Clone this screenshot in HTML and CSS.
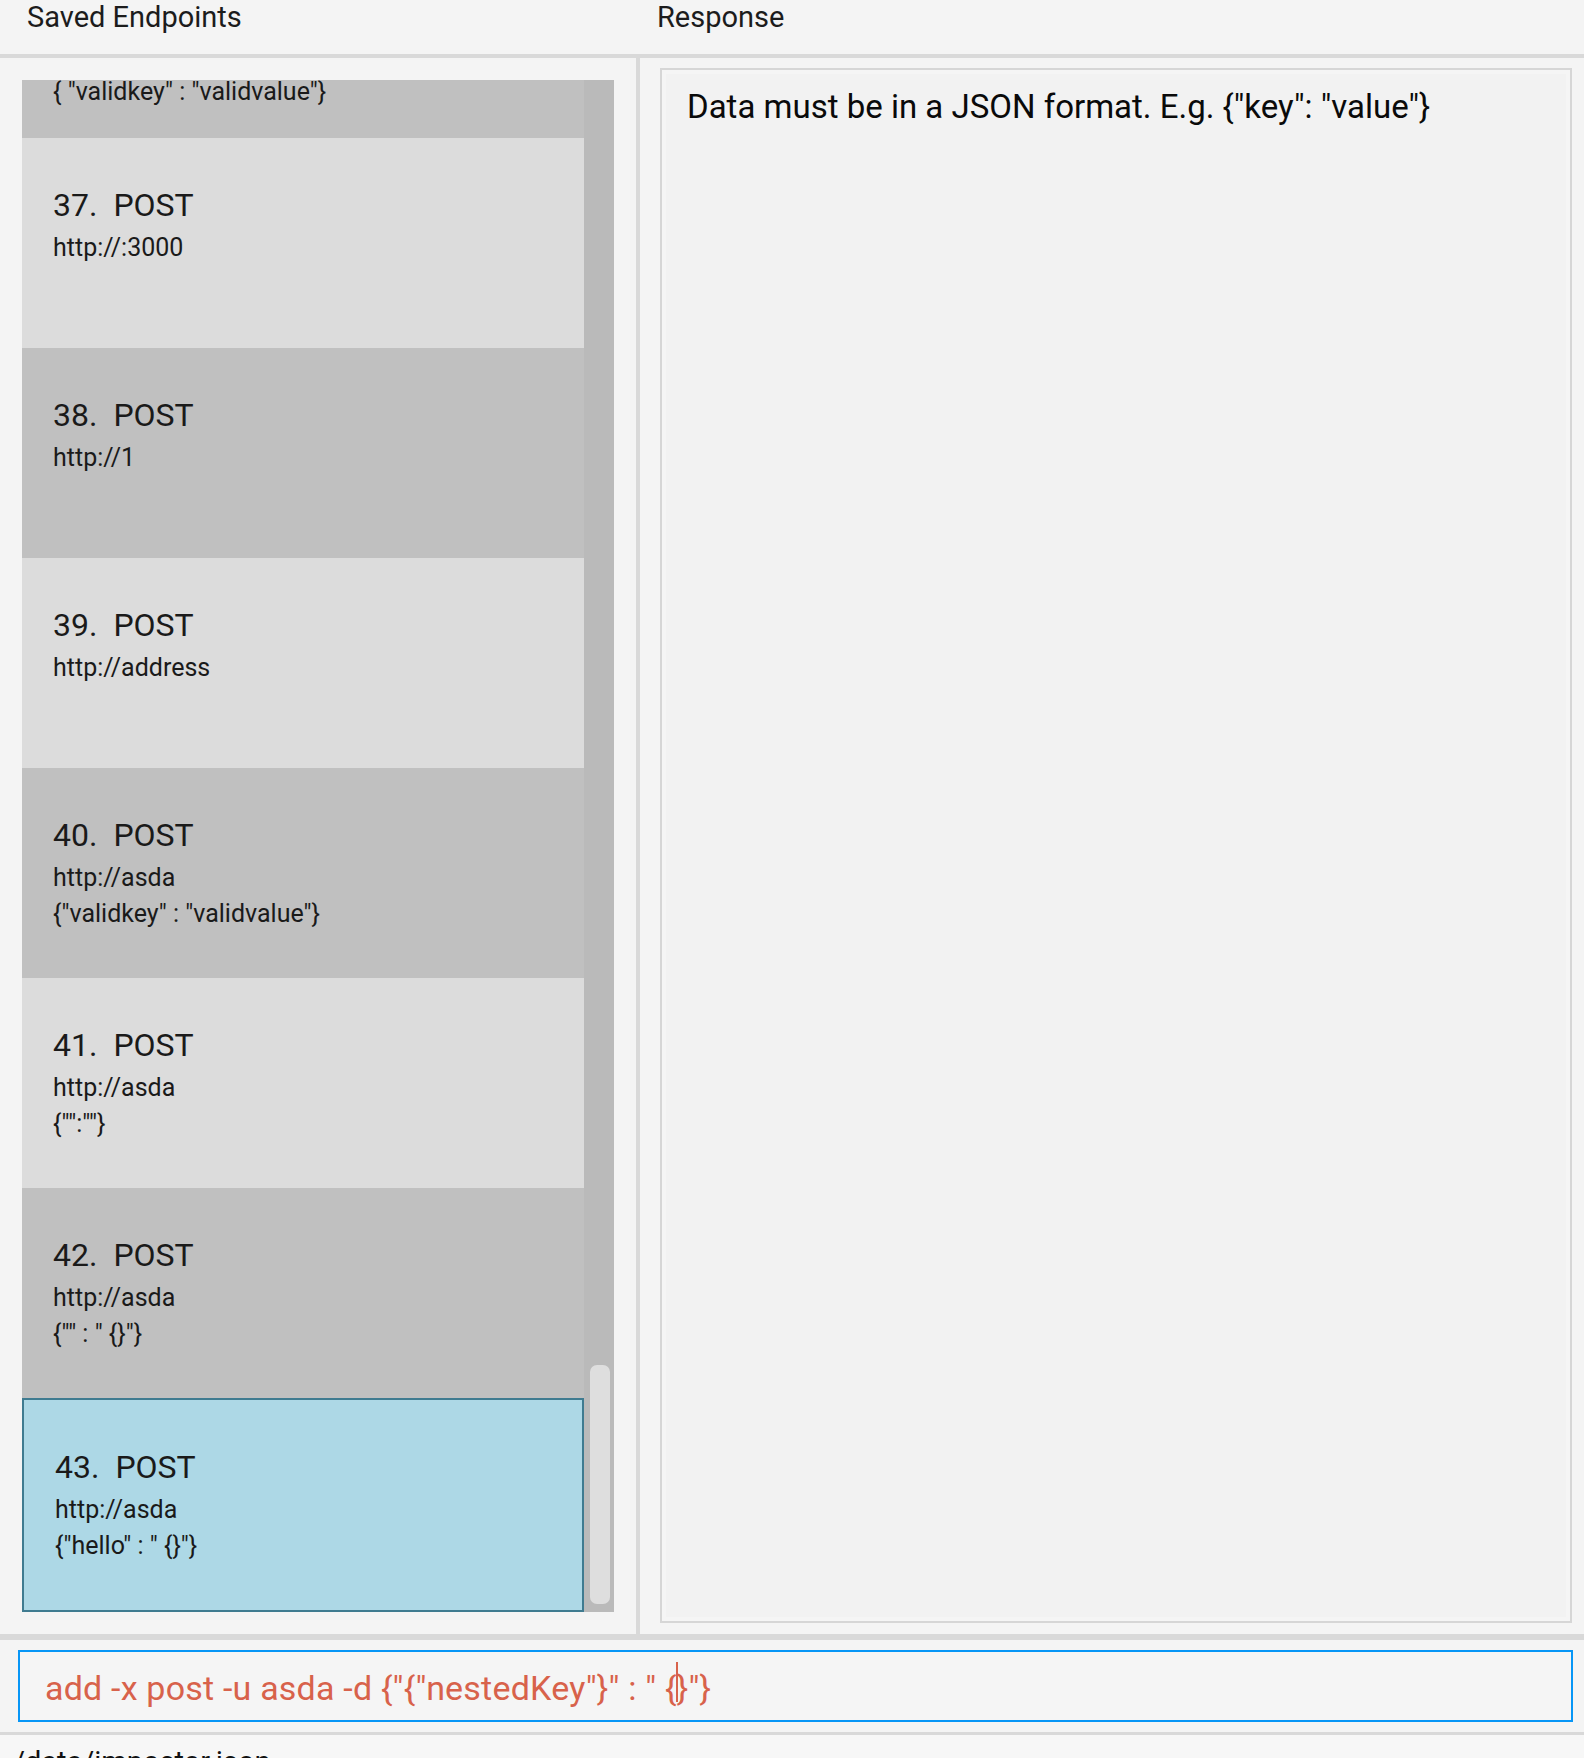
FILE: index.html
```html
<!DOCTYPE html>
<html lang="en">
<head>
<meta charset="utf-8">
<title>Saved Endpoints</title>
<link rel="stylesheet" href="styles.css">
</head>
<body>
<div class="app">
  <div class="header">
    <div class="header-col header-col--left">Saved Endpoints</div>
    <div class="header-col header-col--right">Response</div>
  </div>
  <div class="main">
    <div class="left-pane">
      <div class="list-wrap">
        <div class="list">
          <div class="cell cell--dark cell--partial">
            <div class="cell-line">{ "validkey" : "validvalue"}</div>
          </div>
          <div class="cell cell--light">
            <div class="cell-title"><span class="num">37.</span><span class="method">POST</span></div>
            <div class="cell-line">http://:3000</div>
          </div>
          <div class="cell cell--dark">
            <div class="cell-title"><span class="num">38.</span><span class="method">POST</span></div>
            <div class="cell-line">http://1</div>
          </div>
          <div class="cell cell--light">
            <div class="cell-title"><span class="num">39.</span><span class="method">POST</span></div>
            <div class="cell-line">http://address</div>
          </div>
          <div class="cell cell--dark">
            <div class="cell-title"><span class="num">40.</span><span class="method">POST</span></div>
            <div class="cell-line">http://asda</div>
            <div class="cell-line">{"validkey" : "validvalue"}</div>
          </div>
          <div class="cell cell--light">
            <div class="cell-title"><span class="num">41.</span><span class="method">POST</span></div>
            <div class="cell-line">http://asda</div>
            <div class="cell-line">{"":""}</div>
          </div>
          <div class="cell cell--dark">
            <div class="cell-title"><span class="num">42.</span><span class="method">POST</span></div>
            <div class="cell-line">http://asda</div>
            <div class="cell-line">{"" : " {}"}</div>
          </div>
          <div class="cell cell--selected">
            <div class="cell-title"><span class="num">43.</span><span class="method">POST</span></div>
            <div class="cell-line">http://asda</div>
            <div class="cell-line">{"hello" : " {}"}</div>
          </div>
        </div>
        <div class="scrollbar">
          <div class="thumb"></div>
        </div>
      </div>
    </div>
    <div class="vdivider"></div>
    <div class="right-pane">
      <div class="response">
        <div class="response-inner">Data must be in a JSON format. E.g. {"key": "value"}</div>
      </div>
    </div>
  </div>
  <div class="command-area">
    <div class="command-box">add -x post -u asda -d {"{"nestedKey"}" : " {<span class="caret"></span>}"}</div>
  </div>
  <div class="status">/data/impostor.json</div>
</div>
</body>
</html>
```

FILE: styles.css
```css
* {
  box-sizing: border-box;
}

html, body {
  margin: 0;
  padding: 0;
}

body {
  background: #f4f4f4;
  font-family: Roboto, "Liberation Sans", sans-serif;
  color: #1a1a1a;
  width: 1584px;
  height: 1758px;
  overflow: hidden;
}

.app {
  display: flex;
  flex-direction: column;
  height: 1758px;
}

/* Header */
.header {
  display: grid;
  grid-template-columns: 640px 1fr;
  height: 58px;
  border-bottom: 4px solid #d9d9d9;
  background: #f4f4f4;
  font-size: 29px;
  line-height: 34px;
  color: #1c1c1c;
  flex-shrink: 0;
}

.header-col--left {
  padding-left: 27px;
}

.header-col--right {
  padding-left: 17px;
}

/* Main area */
.main {
  display: flex;
  height: 1576px;
  flex-shrink: 0;
}

.left-pane {
  width: 636px;
  padding: 22px;
}

.list-wrap {
  display: flex;
  height: 1532px;
}

.list {
  flex: 1;
  display: flex;
  flex-direction: column;
  justify-content: flex-end;
  overflow: hidden;
}

.cell {
  flex-shrink: 0;
  height: 210px;
  padding: 47px 31px 0;
  color: #1a1a1a;
}

.cell--partial {
  height: 58px;
  padding-top: 0;
}

.cell--light {
  background: #dcdcdc;
}

.cell--dark {
  background: #c0c0c0;
}

.cell--selected {
  height: 214px;
  background: #add8e6;
  border: 2px solid #3f7b90;
}

.cell-title {
  font-size: 32px;
  line-height: 40px;
  white-space: nowrap;
}

.method {
  margin-left: 16px;
}

.cell-line {
  font-size: 25px;
  line-height: 36px;
  white-space: nowrap;
}

.cell--partial .cell-line {
  line-height: 24px;
}

.cell-title + .cell-line {
  margin-top: 5px;
}

.scrollbar {
  width: 30px;
  background: #bababa;
  display: flex;
  flex-direction: column;
  justify-content: flex-end;
  padding: 0 4px 8px 6px;
}

.thumb {
  height: 239px;
  background: #dedede;
  border-radius: 7px;
}

.vdivider {
  width: 4px;
  background: #d9d9d9;
}

.right-pane {
  flex: 1;
  padding: 10px 12px 11px 20px;
}

.response {
  height: 100%;
  border: 2px solid #d6d6d6;
  padding: 4px;
  background: #f5f5f5;
}

.response-inner {
  height: 100%;
  background: #f2f2f2;
  padding: 13px 21px;
  font-size: 33px;
  line-height: 40px;
  color: #0a0a0a;
}

/* Command input */
.command-area {
  flex-shrink: 0;
  height: 98px;
  border-top: 6px solid #d9d9d9;
  padding: 10px 11px 10px 18px;
}

.command-box {
  height: 72px;
  border: 2px solid #0796f6;
  background: #f5f5f5;
  padding: 14px 25px;
  font-size: 34px;
  line-height: 40px;
  letter-spacing: 0.2px;
  color: #d8624b;
  white-space: nowrap;
}

.caret {
  display: inline-block;
  position: relative;
  width: 0;
  height: 1em;
  vertical-align: baseline;
}

.caret::after {
  content: "";
  position: absolute;
  left: -1px;
  top: -4px;
  width: 2px;
  height: 40px;
  background: #d8624b;
}

/* Status bar */
.status {
  flex: 1;
  border-top: 3px solid #d9d9d9;
  background: #f7f7f7;
  padding: 11px 13px 0;
  font-size: 29px;
  line-height: 32px;
  color: #111;
}
```
